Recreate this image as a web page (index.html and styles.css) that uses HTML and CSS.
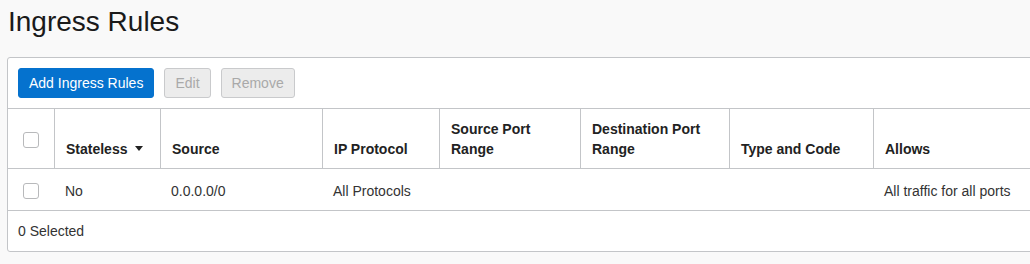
FILE: index.html
```html
<!DOCTYPE html>
<html>
<head>
<meta charset="utf-8">
<link rel="stylesheet" href="styles.css">
</head>
<body>
<h1 class="title">Ingress Rules</h1>
<div class="panel">
  <div class="toolbar">
    <button class="btn btn-primary">Add Ingress Rules</button>
    <button class="btn btn-disabled" disabled>Edit</button>
    <button class="btn btn-disabled" disabled>Remove</button>
  </div>
  <table class="grid">
    <thead>
      <tr>
        <th class="c0 sel"><span class="cb"></span></th>
        <th class="c1">Stateless<span class="sort"></span></th>
        <th class="c2">Source</th>
        <th class="c3">IP Protocol</th>
        <th class="c4">Source Port<br>Range</th>
        <th class="c5">Destination Port<br>Range</th>
        <th class="c6">Type and Code</th>
        <th class="c7">Allows</th>
      </tr>
    </thead>
    <tbody>
      <tr>
        <td class="sel"><span class="cb"></span></td>
        <td>No</td>
        <td>0.0.0.0/0</td>
        <td>All Protocols</td>
        <td></td>
        <td></td>
        <td></td>
        <td>All traffic for all ports</td>
      </tr>
    </tbody>
  </table>
  <div class="footer">0 Selected</div>
</div>
</body>
</html>
```

FILE: styles.css
```css
html, body {
  margin: 0;
  padding: 0;
  overflow: hidden;
  background: #f9f9f9;
  font-family: "Liberation Sans", Arial, sans-serif;
  color: #333;
}

.title {
  margin: 0;
  padding: 2px 0 0 8px;
  font-size: 28px;
  line-height: 40px;
  font-weight: normal;
  color: #1a1a1a;
}

.panel {
  margin: 15px 0 0 7px;
  width: 1040px;
  background: #fff;
  border: 1px solid #c3c5c8;
  border-radius: 3px;
  box-sizing: border-box;
}

.toolbar {
  display: flex;
  align-items: flex-start;
  gap: 10px;
  padding: 10px;
  height: 50px;
  box-sizing: border-box;
}

.btn {
  height: 30px;
  padding: 0 10px;
  font-family: "Liberation Sans", Arial, sans-serif;
  font-size: 14px;
  border-radius: 3px;
  border: 1px solid;
  box-sizing: border-box;
}

.btn-primary {
  background: #0572ce;
  border-color: #0572ce;
  color: #fff;
}

.btn-disabled {
  background: #ececec;
  border-color: #c9cacc;
  color: #a9a9a9;
}

.grid {
  border-collapse: separate;
  border-spacing: 0;
  table-layout: fixed;
  width: 1038px;
  font-size: 14px;
}

.grid th {
  box-sizing: border-box;
  height: 61px;
  border-top: 1px solid #c3c5c8;
  border-bottom: 1px solid #c3c5c8;
  border-left: 1px solid #c3c5c8;
  padding: 0 8px 9px 11px;
  text-align: left;
  vertical-align: bottom;
  font-weight: bold;
  line-height: 20px;
  color: #222;
}

.grid th.c0 { border-left: none; width: 46px; }
.grid th.c1 { width: 106px; }
.grid th.c2 { width: 162px; }
.grid th.c3 { width: 117px; }
.grid th.c4 { width: 141px; }
.grid th.c5 { width: 149px; }
.grid th.c6 { width: 144px; }
.grid th.c7 { width: 173px; }

.grid td {
  box-sizing: border-box;
  height: 42px;
  border-bottom: 1px solid #c3c5c8;
  padding: 2px 8px 0 11px;
  vertical-align: middle;
  line-height: 20px;
  white-space: nowrap;
  color: #333;
}

.grid th.sel, .grid td.sel {
  padding: 0;
  text-align: center;
  vertical-align: middle;
}

.cb {
  display: inline-block;
  width: 16px;
  height: 16px;
  box-sizing: border-box;
  border: 1px solid #b8b9bb;
  border-radius: 3px;
  background: #fff;
  vertical-align: middle;
}

.sort {
  display: inline-block;
  width: 0;
  height: 0;
  margin-left: 8px;
  border-left: 4.5px solid transparent;
  border-right: 4.5px solid transparent;
  border-top: 5px solid #222;
  vertical-align: 3px;
}

.footer {
  height: 39px;
  line-height: 39px;
  padding-top: 1px;
  padding-left: 10px;
  font-size: 14px;
  color: #333;
}
```
